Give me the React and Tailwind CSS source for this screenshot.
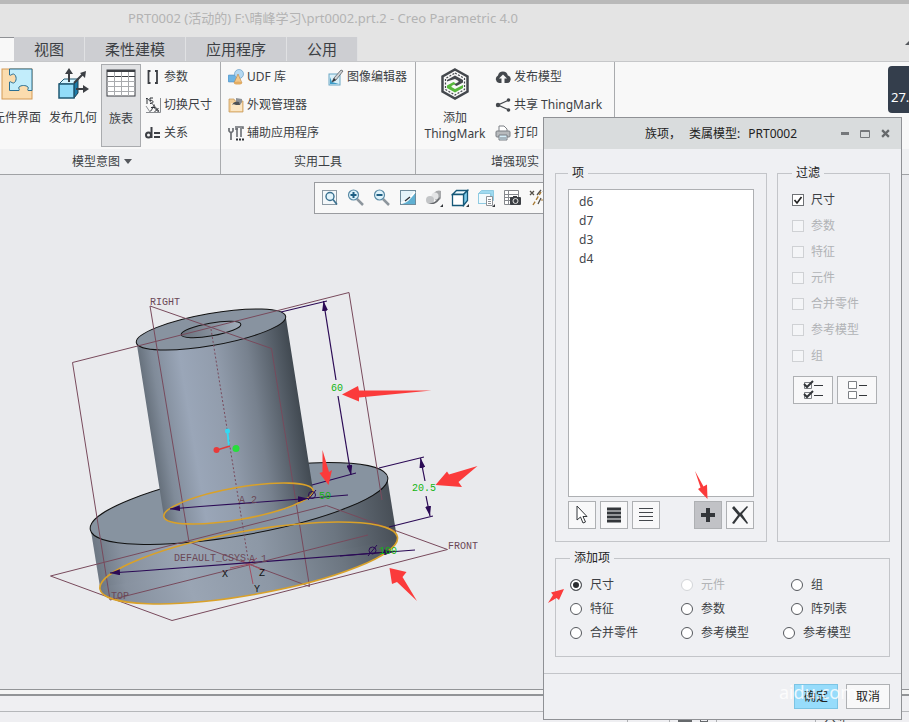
import React, { useState } from 'react';

const FILTERS = ['尺寸', '参数', '特征', '元件', '合并零件', '参考模型', '组'];

const ADD_ROWS = [
  [{ id: 'dim', label: '尺寸' }, { id: 'comp', label: '元件', disabled: true }, { id: 'group', label: '组' }],
  [{ id: 'feat', label: '特征' }, { id: 'param', label: '参数' }, { id: 'table', label: '阵列表' }],
  [{ id: 'merge', label: '合并零件' }, { id: 'ref', label: '参考模型' }, { id: 'ref2', label: '参考模型', shifted: true }],
];

/* ---------- ribbon icons ---------- */

const PuzzleIcon = () => (
  <svg width="32" height="32" viewBox="0 0 32 32">
    <rect x="1" y="1" width="30" height="30" fill="#fbdcae" stroke="#d49a55" />
    <path d="M8.500 1H31v21.500h-4c-1-1 1-2 0-3.500-2-2-7-2-9 0-1 1.500 1 2.500 0 3.500H8.500V14c1-1 2 1 4 1 3.500-1 3.500-8 0-9-2 0-3 2-4 1z" fill="#c2edfb" stroke="#2b6f93" />
  </svg>
);

const PublishIcon = () => (
  <svg width="32" height="32" viewBox="0 0 32 32" fill="none">
    <path d="M2 16l5-5h14l-4 5z" fill="#d4f4ff" stroke="#1f5873" />
    <path d="M17 16l4-5v14l-4 5z" fill="#1b7ba8" stroke="#1f3c4a" />
    <rect x="2" y="16" width="15" height="14" fill="#92dcf9" stroke="#1f5873" strokeWidth="1.500" />
    <path d="M12 14V4M17 15L26 6M19 21h9" stroke="#3c3f44" strokeWidth="2" />
    <path d="M12 0l4 6H8zM29 3l-1 7-5-5zM32 21l-6-4v8z" fill="#3c3f44" />
  </svg>
);

const TableIcon = () => (
  <svg width="30" height="28" viewBox="0 0 30 28">
    <rect x="1" y="1" width="28" height="26" fill="#fff" stroke="#3c3f44" />
    <rect x="1" y="1" width="28" height="2" fill="#3c3f44" />
    <path d="M1 7.500h28" stroke="#3c3f44" />
    <path d="M8.500 3v24M15.500 3v24M22.500 3v24M1 12.500h28M1 17.500h28M1 22.500h28" stroke="#a9abae" />
  </svg>
);

const HexIcon = () => (
  <svg width="30" height="32" viewBox="0 0 30 32" fill="none">
    <path d="M15 1.500l12.500 7v15L15 30.500l-12.500-7v-15z" stroke="#44484d" strokeWidth="2.500" />
    <path d="M15 5l9.500 5.500v11L15 27l-9.500-5.500v-11z" stroke="#44484d" strokeWidth="1.200" strokeDasharray="2 1.500" />
    <path d="M7 13.500V12l8-4.500 8 4.500v2.500L16.500 18l-2.500-1.500 4.500-2.500v-1L15 11z" fill="#44484d" />
    <path d="M7 17.500l6.500-3.500 2.500 1.500-4.500 2.500v1l3.500 2 8-4v3L15 24.500 7 20z" fill="#58b83c" />
  </svg>
);

const BracketIcon = () => (
  <svg width="16" height="16" viewBox="0 0 16 16" fill="none" stroke="#3c3f44" strokeWidth="1.800">
    <path d="M5.500 2H3.500v12h2M10 2h2v12h-2" />
  </svg>
);

const SwitchDimIcon = () => (
  <svg width="16" height="16" viewBox="0 0 16 16" fill="none" stroke="#8a8d91">
    <path d="M15.500 1v14.500H1M1 9l4 6M9 9l5 6" />
    <path d="M1 2l1-1v6M8 1H5v2.500c4-1 4 3.500 0 3" stroke="#2f3237" />
    <path d="M2 1l12 13" stroke="#55585d" />
    <path d="M5 14c2 1 3-7 5-6M6 10.500h4M9.500 11l4 4M13.500 11l-4 4" stroke="#2f3237" />
  </svg>
);

const RelationIcon = () => (
  <svg width="16" height="16" viewBox="0 0 16 16" fill="none" stroke="#3c3f44" strokeWidth="2">
    <circle cx="3.500" cy="10" r="2.500" />
    <path d="M6.500 2v11M9 8h6M9 12h6" />
  </svg>
);

const UdfIcon = () => (
  <svg width="16" height="16" viewBox="0 0 16 16">
    <rect x="0" y="6" width="9" height="7" rx="1" fill="#6db4e4" stroke="#3c7fb4" strokeWidth=".5" />
    <circle cx="11" cy="5" r="4.500" fill="#b4d8f2" stroke="#5b94c0" strokeWidth=".6" />
    <path d="M10 5l4 9H6z" fill="#f3c88a" stroke="#b98446" strokeWidth=".6" />
    <ellipse cx="10" cy="14" rx="4" ry="1.500" fill="#e3ac62" />
  </svg>
);

const AppearanceIcon = () => (
  <svg width="16" height="16" viewBox="0 0 16 16">
    <path d="M1 2h5l1 2h8v11H1z" fill="#f3cf98" stroke="#c39352" strokeWidth=".7" />
    <path d="M3 6h11v8H3z" fill="#fbe6c4" />
    <path d="M8 1l6 1v3l-2 3H8z" fill="#8d9196" />
    <path d="M4 8c1-3 4-4 7-3l1 3H8c-2-1-3-1-4 0z" fill="#4d5156" />
  </svg>
);

const ToolsIcon = () => (
  <svg width="16" height="16" viewBox="0 0 16 16" fill="none" stroke="#6a6e73">
    <path d="M1 3v3l2 2 2-2V3M3 8v7" strokeWidth="1.700" />
    <path d="M7 2h8v2M9 3v9M13 3v9M7 4h3" strokeWidth="1.600" />
    <path d="M8 14.500h2M11 14.500h2M14 14.500h2" stroke="#2f3237" strokeWidth="2" />
  </svg>
);

const ImageEditIcon = () => (
  <svg width="16" height="17" viewBox="0 0 16 17">
    <rect x="1" y="5" width="11" height="11" fill="#d9f0f9" stroke="#6aa6c4" />
    <path d="M2 15V8l2 5 7 2z" fill="#3d9cc8" />
    <path d="M4 13l2-4 7-8 2 1-7 9z" fill="#d2d4d6" stroke="#5b5f64" strokeWidth=".8" />
    <path d="M4 13l2-4 2 2z" fill="#2f3237" />
  </svg>
);

const CloudIcon = () => (
  <svg width="16" height="16" viewBox="0 0 16 16">
    <path d="M4 14a4 4 0 0 1-1-7.500 5 5 0 0 1 9.800 0A3.800 3.800 0 0 1 12 14z" fill="#44484d" />
    <path d="M8 5.500l4 4H9.500V14h-3V9.500H4z" fill="#f8f8f8" />
  </svg>
);

const ShareIcon = () => (
  <svg width="16" height="16" viewBox="0 0 16 16">
    <path d="M14 3L3 8l11 5" fill="none" stroke="#44484d" strokeWidth="1.300" />
    <circle cx="13.500" cy="3" r="1.800" fill="#44484d" />
    <circle cx="3" cy="8" r="2.200" fill="#44484d" />
    <circle cx="13.500" cy="13" r="1.800" fill="#44484d" />
  </svg>
);

const PrintIcon = () => (
  <svg width="16" height="16" viewBox="0 0 16 16" stroke="#7b7f84">
    <path d="M4 7V1h5l3 3v3" fill="#fff" />
    <rect x="1" y="6" width="14" height="6" rx="1" fill="#b7babd" />
    <path d="M4 10h8v5H4z" fill="#d5eef9" />
    <path d="M5 13h6" />
  </svg>
);

/* ---------- graphics toolbar icons ---------- */

const Corner = () => <path d="M18 15v3h-3z" fill="#33363a" />;

const VIEW_TOOLS = [
  { name: '重新调整', art: (
    <>
      <rect x="1.500" y="1.500" width="14" height="14" fill="#f4f8fa" stroke="#8c9aa4" />
      <circle cx="9" cy="7.500" r="4" fill="#e2f4fb" stroke="#39708f" strokeWidth="1.400" />
      <path d="M12 10.500l4 5" stroke="#39708f" strokeWidth="1.600" />
    </>
  ) },
  { name: '放大', art: (
    <>
      <path d="M10 10l6 6" stroke="#8d969d" strokeWidth="2.500" />
      <circle cx="6.500" cy="6" r="5" fill="#dff3fb" stroke="#5a8ba6" strokeWidth="1.200" />
      <path d="M6.500 3v6M3.500 6h6" stroke="#1f5f83" strokeWidth="2" />
    </>
  ) },
  { name: '缩小', art: (
    <>
      <path d="M10 10l6 6" stroke="#8d969d" strokeWidth="2.500" />
      <circle cx="6.500" cy="6" r="5" fill="#dff3fb" stroke="#5a8ba6" strokeWidth="1.200" />
      <path d="M3.500 6h6" stroke="#1f5f83" strokeWidth="2" />
    </>
  ) },
  { name: '重画', art: (
    <>
      <rect x="1.500" y="1.500" width="15" height="14" fill="#e4f3f9" stroke="#6f8c9c" />
      <path d="M16 4v11H3c5-1 9-5 13-11z" fill="#5fb0d2" />
      <path d="M2 14C8 12 12 8 16 3" stroke="#fff" strokeWidth="1.600" />
      <path d="M6 12l5-4" stroke="#2f3237" strokeWidth="1.500" />
    </>
  ) },
  { name: '渲染', art: (
    <>
      <path d="M9 4c2-3 6-3 7-2v7c-1 3-5 3-6 2z" fill="#a7a9ab" />
      <circle cx="10" cy="7" r="3.500" fill="#e4e5e6" />
      <circle cx="5" cy="11" r="4" fill="#c3c5c7" />
      <path d="M3 14c5 1 8-2 12-6-1 5-6 9-12 6z" fill="#66696d" />
      <Corner />
    </>
  ) },
  { name: '显示样式', art: (
    <>
      <path d="M1.500 5.500l4-4h11l-4 4z" fill="#eefaff" stroke="#155878" strokeWidth="1.300" />
      <path d="M12.500 5.500l4-4v10l-4 5z" fill="#7fcdec" stroke="#155878" strokeWidth="1.300" />
      <path d="M1.500 5.500h11v11h-11z" fill="#fff" stroke="#155878" strokeWidth="1.300" />
      <Corner />
    </>
  ) },
  { name: '已保存方向', art: (
    <>
      <path d="M1.500 4.500l3-3h12v10H14V4.500z" fill="#9edaf0" stroke="#8fcbe2" />
      <rect x="1.500" y="4.500" width="12" height="10" fill="#f1fafd" stroke="#8fcbe2" />
      <path d="M9.500 7.500h6v9h-6z" fill="#fff" stroke="#8d9196" />
      <path d="M11 10.500h3M11 12.500h3M11 14.500h3" stroke="#8d9196" />
      <Corner />
    </>
  ) },
  { name: '视图管理器', art: (
    <>
      <path d="M1.500 1.500h14v14h-14zM1.500 5.500h14M5.500 1.500v14M1.500 8.500h14M1.500 11.500h8" fill="#fff" stroke="#85888d" />
      <rect x="7" y="8" width="11" height="8" rx="1" fill="#3c3f44" />
      <path d="M10 7h4v2h-4z" fill="#3c3f44" />
      <circle cx="12.500" cy="12" r="2.500" fill="#3c3f44" stroke="#e5e5e5" />
    </>
  ) },
  { name: '基准显示', art: (
    <>
      <path d="M1 2l4 4M5 2L1 6M8 6l4-5M14 2l2 2M9 15l3-6" stroke="#54504a" strokeWidth="1.300" />
      <path d="M4 16L12 3" stroke="#a87a33" strokeWidth="1.400" strokeDasharray="4 2" />
      <path d="M12 11h4" stroke="#a87a33" />
    </>
  ) },
];

/* ---------- ribbon ---------- */

const SmallCommand = ({ icon, children }) => (
  <button type="button" className="flex h-7 items-center gap-[3px] whitespace-nowrap leading-4">
    {icon}
    <span>{children}</span>
  </button>
);

const RibbonGroup = ({ title, className, titleClass = '', children }) => (
  <section className={`flex shrink-0 flex-col border-r border-[#a9abae] ${className}`}>
    <div className="flex h-[87px] items-start">{children}</div>
    <h2 className={`flex h-[25px] items-center justify-center gap-1 bg-[#eff0f2] ${titleClass}`}>{title}</h2>
  </section>
);

const Tab = ({ children }) => (
  <button type="button" className="h-6 border-r border-[#e0e1e3] bg-[#cdced2] px-5 text-[15px] leading-6">
    {children}
  </button>
);

const Ribbon = () => (
  <div className="flex h-[113px] shrink-0 border-b border-[#a0a2a5] bg-[#f8f8f8]">
    <RibbonGroup
      className="w-[221px]"
      titleClass="pr-4"
      title={
        <>
          模型意图
          <svg width="8" height="5" viewBox="0 0 8 5"><path d="M0 0h8L4 5z" fill="#55585d" /></svg>
        </>
      }
    >
      <button type="button" className="-ml-2 flex w-[50px] shrink-0 flex-col items-center gap-2 whitespace-nowrap pt-1.5 leading-5">
        <PuzzleIcon />
        元件界面
      </button>
      <button type="button" className="ml-1.5 flex w-[50px] shrink-0 flex-col items-center gap-2 whitespace-nowrap pt-1.5 leading-5">
        <PublishIcon />
        发布几何
      </button>
      <button type="button" className="ml-[3px] mt-0.5 flex h-[83px] w-10 shrink-0 flex-col items-center gap-3 border border-[#a9abae] bg-[#e1e2e4] pt-1 leading-5">
        <TableIcon />
        族表
      </button>
      <div className="ml-1 flex flex-col pt-px">
        <SmallCommand icon={<BracketIcon />}>参数</SmallCommand>
        <SmallCommand icon={<SwitchDimIcon />}>切换尺寸</SmallCommand>
        <SmallCommand icon={<RelationIcon />}>关系</SmallCommand>
      </div>
    </RibbonGroup>

    <RibbonGroup className="w-[195px]" title="实用工具">
      <div className="ml-[7px] flex w-[100px] flex-col pt-px">
        <SmallCommand icon={<UdfIcon />}>UDF 库</SmallCommand>
        <SmallCommand icon={<AppearanceIcon />}>外观管理器</SmallCommand>
        <SmallCommand icon={<ToolsIcon />}>辅助应用程序</SmallCommand>
      </div>
      <div className="pt-px">
        <SmallCommand icon={<ImageEditIcon />}>图像编辑器</SmallCommand>
      </div>
    </RibbonGroup>

    <RibbonGroup className="w-[199px]" title="增强现实">
      <button type="button" className="ml-1.5 flex w-[66px] flex-col items-center pt-1.5 leading-4">
        <HexIcon />
        <span className="mt-2.5">添加</span>
        <span>ThingMark</span>
      </button>
      <div className="ml-[7px] flex flex-col pt-px">
        <SmallCommand icon={<CloudIcon />}>发布模型</SmallCommand>
        <SmallCommand icon={<ShareIcon />}>共享 ThingMark</SmallCommand>
        <SmallCommand icon={<PrintIcon />}>打印</SmallCommand>
      </div>
    </RibbonGroup>

    <div className="flex flex-1 flex-col">
      <div className="h-[87px]" />
      <div className="h-[25px] bg-[#eff0f2]" />
    </div>
  </div>
);

/* ---------- 3D model ---------- */

const Model = () => (
  <svg width="543" height="514" viewBox="0 175 543 514" fill="none">
    <defs>
      <linearGradient id="shaft" gradientUnits="userSpaceOnUse" x1="148" y1="430" x2="300" y2="405">
        <stop offset="0" stopColor="#626c77" />
        <stop offset=".1" stopColor="#808b99" />
        <stop offset=".28" stopColor="#9aa6b8" />
        <stop offset=".5" stopColor="#929dad" />
        <stop offset=".72" stopColor="#77818e" />
        <stop offset="1" stopColor="#414951" />
      </linearGradient>
      <linearGradient id="flange" gradientUnits="userSpaceOnUse" x1="93" y1="570" x2="394" y2="520">
        <stop offset="0" stopColor="#69737f" />
        <stop offset=".1" stopColor="#87919f" />
        <stop offset=".3" stopColor="#9aa5b4" />
        <stop offset=".55" stopColor="#8d98a6" />
        <stop offset=".8" stopColor="#6c7681" />
        <stop offset="1" stopColor="#484f57" />
      </linearGradient>
      <linearGradient id="hole" x1="0" y1="0" x2="1" y2="0">
        <stop offset="0" stopColor="#69727d" />
        <stop offset="1" stopColor="#a3aebb" />
      </linearGradient>
      <marker id="dim" orient="auto" markerUnits="userSpaceOnUse" markerWidth="11" markerHeight="6" refX="10" refY="3">
        <path d="M0 0l10 3-10 3z" fill="#2b0a55" />
      </marker>
    </defs>

    {/* solids */}
    <ellipse cx="248.700" cy="563" rx="151" ry="32" transform="rotate(-9.950 248.700 563)" fill="url(#flange)" />
    <path d="M90.500 528L100 587 249 566 397.300 540 387.500 479z" fill="url(#flange)" />
    <ellipse cx="239" cy="503.500" rx="151" ry="32" transform="rotate(-9.950 239 503.500)" fill="#8793a0" stroke="#111" />
    <path d="M136.500 342L164 517A75.800 16-9.950 0 0 313.300 492L285.800 317A75.800 16-9.950 0 1 136.500 342z" fill="url(#shaft)" />
    <ellipse cx="211" cy="329.500" rx="75.800" ry="16" transform="rotate(-9.950 211 329.500)" fill="#8893a0" stroke="#111" />
    <ellipse cx="211" cy="329.500" rx="30.300" ry="6.400" transform="rotate(-9.950 211 329.500)" fill="url(#hole)" stroke="#111" />

    {/* datum planes */}
    <g stroke="#784a5c">
      <path d="M110 600L72.500 362.500 349 292.500 382 500M110 600L368 535" />
      <path d="M189 542L150 306 271.500 348.500 309.500 586.500z" />
      <path d="M50.500 576L172 620.500 447.500 549.500 326.500 505.500z" />
      <path d="M211 329L249 565" strokeDasharray="2 2" />
      <path d="M230 568l19-4 4 20M249 564l16 7M249 564l-7-3M249 564l8-6" stroke="#a04f62" />
    </g>

    {/* selected edges */}
    <g stroke="#d9a129" strokeWidth="1.600">
      <ellipse cx="238.500" cy="503.500" rx="75.800" ry="16" transform="rotate(-9.950 238.500 503.500)" />
      <ellipse cx="248.700" cy="563" rx="151" ry="32" transform="rotate(-9.950 248.700 563)" />
    </g>

    {/* dimensions */}
    <g stroke="#2b0a55" strokeWidth="1.200">
      <path d="M281 312l46-11M312 485l44-12M379 468l45-11M389 527l44-11M300 499l48-4M140 571L415 550" />
      <path d="M336 380L323.500 301" markerEnd="url(#dim)" />
      <path d="M338 396L351 475" markerEnd="url(#dim)" />
      <path d="M425 481L420.500 458" markerEnd="url(#dim)" />
      <path d="M426 496L430 516" markerEnd="url(#dim)" />
      <path d="M200 506.500L170 509" markerEnd="url(#dim)" />
      <path d="M200 506.500L308 498.500" markerEnd="url(#dim)" />
      <path d="M140 571L110 573" markerEnd="url(#dim)" />
      <path d="M340 556L394 551.500" markerEnd="url(#dim)" />
    </g>

    {/* orientation triad */}
    <path d="M227.500 432l1.500 14" stroke="#35d8f2" strokeWidth="2" />
    <path d="M217 450l13-4" stroke="#e03a3a" strokeWidth="1.500" />
    <circle cx="227.500" cy="431" r="2.500" fill="#35d8f2" />
    <circle cx="216.500" cy="450" r="3" fill="#e83a3a" />
    <circle cx="236" cy="448.500" r="3.500" fill="#27de3b" />

    <g fontFamily="'Liberation Mono', monospace" fontSize="10" fill="#6b4856">
      <text x="150" y="305">RIGHT</text>
      <text x="448" y="549">FRONT</text>
      <text x="111" y="599">TOP</text>
      <text x="174" y="561">DEFAULT_CSYS</text>
      <text x="249" y="562">A_1</text>
      <text x="239" y="503">A_2</text>
      <g fill="#111">
        <text x="222" y="577">X</text>
        <text x="259" y="576">Z</text>
        <text x="254" y="592">Y</text>
      </g>
      <g fill="#12b512">
        <text x="331" y="391">60</text>
        <text x="412" y="491">20.5</text>
        <text x="319" y="499">50</text>
        <text x="379" y="554">100</text>
      </g>
    </g>
    <g stroke="#2b0a55">
      <circle cx="312" cy="495" r="3.500" />
      <path d="M308 500l8-10M368 556l9-11" />
      <circle cx="372.500" cy="550.500" r="3.500" />
    </g>

    {/* callouts */}
    <g fill="#fb3b3b">
      <path d="M342 394.500l16-8.500 1 4.500 72.500 0-72.500 7v4z" />
      <path d="M322.500 450l6.500 22 3-2-3.500 15-9-12 3-1z" />
      <path d="M477.500 466l-28.500 8.500-2-3-11.500 13.500 26.500 2-3.500-5z" />
      <path d="M389.500 568l17 4-4 5 14.500 24-20-19-5 2z" />
    </g>
  </svg>
);

const Viewport = () => (
  <main className="relative min-h-0 flex-1 overflow-hidden bg-[#e9eaed]">
    <Model />
    <div className="absolute left-[314px] top-[7px] flex h-8 w-[248px] items-center gap-2 border border-[#9a9ca0] bg-[#f8f8f8] pl-1.5">
      {VIEW_TOOLS.map((tool) => (
        <button key={tool.name} type="button" aria-label={tool.name} className="shrink-0">
          <svg width="18" height="18" viewBox="0 0 18 18" fill="none">{tool.art}</svg>
        </button>
      ))}
    </div>
  </main>
);

/* ---------- dialog ---------- */

const Panel = ({ title, className = '', children }) => (
  <fieldset className={`min-w-0 border border-[#c3c5c9] ${className}`}>
    <legend className="px-1 leading-4 text-[#222]">{title}</legend>
    {children}
  </fieldset>
);

const ToolButton = ({ label, active, className = 'h-7 w-7', children }) => (
  <button
    type="button"
    aria-label={label}
    className={`flex shrink-0 items-center justify-center border border-[#aeb0b3] ${active ? 'bg-[#c1c2c6]' : 'bg-[#f8f8f9]'} ${className}`}
  >
    {children}
  </button>
);

const CheckRow = ({ label, checked, disabled, onChange }) => (
  <label className={`flex h-[26px] items-center gap-[7px] ${disabled ? 'text-[#b1b3b6]' : 'text-[#3c3f44]'}`}>
    <span className="grid h-3 w-3 place-items-center">
      <input
        type="checkbox"
        checked={checked}
        disabled={disabled}
        onChange={onChange}
        className="col-start-1 row-start-1 h-3 w-3 appearance-none border border-[#6f7276] bg-white disabled:border-[#cfd1d4] disabled:bg-[#f4f5f7]"
      />
      {checked && (
        <svg width="10" height="10" viewBox="0 0 10 10" fill="none" className="pointer-events-none col-start-1 row-start-1">
          <path d="M1.500 5l2.500 3 4.500-6" stroke="#222" strokeWidth="1.700" />
        </svg>
      )}
    </span>
    {label}
  </label>
);

const RadioOption = ({ option, value, onChange }) => (
  <label
    className={`flex items-center gap-2 ${option.shifted ? '-ml-2' : ''} ${option.disabled ? 'text-[#b1b3b6]' : 'text-[#3c3f44]'}`}
  >
    <input
      type="radio"
      name="add-item"
      checked={value === option.id}
      disabled={option.disabled}
      onChange={() => onChange(option.id)}
      className="h-3 w-3 shrink-0 appearance-none rounded-full border border-[#55585d] bg-white checked:bg-[#2b2d30] checked:shadow-[inset_0_0_0_2px_white] disabled:border-[#d3d5d8]"
    />
    {option.label}
  </label>
);

const FamilyDialog = () => {
  const [filterOn, setFilterOn] = useState(true);
  const [addType, setAddType] = useState('dim');

  return (
    <div role="dialog" aria-label="族项" className="absolute right-[7px] top-[117px] w-[359px] border border-[#8f9195] bg-[#eff0f3]">
      <header className="flex h-[31px] items-center bg-[#d9dcdd] pl-[101px] pr-2 leading-5 text-[#222]">
        <span className="flex gap-2 whitespace-nowrap">
          <span>族项，</span>
          <span>类属模型:</span>
          <span>PRT0002</span>
        </span>
        <div className="ml-auto flex items-center gap-1">
          <button type="button" aria-label="最小化" className="flex h-4 w-4 items-center justify-center">
            <svg width="8" height="3" viewBox="0 0 8 3"><path d="M0 0h8v3H0z" fill="#75787b" /></svg>
          </button>
          <button type="button" aria-label="最大化" className="flex h-4 w-4 items-center justify-center">
            <svg width="10" height="8" viewBox="0 0 10 8"><path d="M.5.5h9v7h-9zM0 1.500h10" fill="none" stroke="#75787b" /></svg>
          </button>
          <button type="button" aria-label="关闭" className="flex h-4 w-4 items-center justify-center">
            <svg width="9" height="9" viewBox="0 0 8 8"><path d="M1 1l6 6M7 1L1 7" stroke="#66696c" strokeWidth="2" /></svg>
          </button>
        </div>
      </header>

      <div className="flex gap-2.5 px-[11px] pt-4">
        <Panel title="项" className="w-[212px] shrink-0 px-3 pb-3">
          <ul className="mt-2 h-[308px] border border-[#aeb0b3] bg-white py-0.5 pl-2.5 leading-[19px] text-[#44474c]">
            {['d6', 'd7', 'd3', 'd4'].map((d) => <li key={d}>{d}</li>)}
          </ul>
          <div className="mt-1 flex gap-1">
            <ToolButton label="选择">
              <svg width="14" height="20" viewBox="0 0 14 20"><path d="M2 1v14l3.500-3 2.500 6 2.500-1L8 11.500h4z" fill="#fff" stroke="#33363a" /></svg>
            </ToolButton>
            <ToolButton label="全部选择">
              <svg width="14" height="16" viewBox="0 0 14 16"><path d="M0 2h14M0 6h14M0 10h14M0 14h14" stroke="#33363a" strokeWidth="3" /></svg>
            </ToolButton>
            <ToolButton label="全部取消">
              <svg width="14" height="14" viewBox="0 0 14 14"><path d="M0 .5h14M0 4.500h14M0 8.500h14M0 12.500h14" stroke="#44474c" /></svg>
            </ToolButton>
            <div className="relative ml-auto">
              <ToolButton label="添加" active>
                <svg width="14" height="14" viewBox="0 0 14 14"><path d="M7 0v14M0 7h14" stroke="#33363a" strokeWidth="4" /></svg>
              </ToolButton>
              <svg width="14" height="28" viewBox="0 0 14 28" className="pointer-events-none absolute -top-[30px] left-0">
                <path d="M1 0l8.500 15.500 3.500-2 .5 14.500-9.500-10 2.500-1.500z" fill="#fb3b3b" />
              </svg>
            </div>
            <ToolButton label="移除">
              <svg width="18" height="18" viewBox="0 0 18 18"><path d="M1 2l2-2 6 7 7-7 1 1-6 7 6 9-1 1-7-8-6 8-2-1 6-8z" fill="#33363a" /></svg>
            </ToolButton>
          </div>
        </Panel>

        <Panel title="过滤" className="flex-1 pl-3.5">
          <div className="mt-1.5">
            {FILTERS.map((name, i) => (
              <CheckRow
                key={name}
                label={name}
                checked={i === 0 && filterOn}
                disabled={i > 0}
                onChange={() => setFilterOn(!filterOn)}
              />
            ))}
          </div>
          <div className="mt-[7px] flex gap-1 pl-px">
            <ToolButton label="全部过滤" className="h-7 w-10">
              <svg width="20" height="20" viewBox="0 0 20 20" fill="none" stroke="#33363a">
                <path d="M1.500 2.500h7v6h-7zM1.500 12.500h7v6h-7z" stroke="#7d8085" />
                <path d="M1 4l3 3 6-6M1 14l3 3 6-6" strokeWidth="2" />
                <path d="M11 5.500h9M11 15.500h9" />
              </svg>
            </ToolButton>
            <ToolButton label="清除过滤" className="h-7 w-10">
              <svg width="20" height="20" viewBox="0 0 20 20" fill="none" stroke="#33363a">
                <path d="M1.500 1.500h8v7h-8zM1.500 11.500h8v7h-8z" fill="#fff" stroke="#7d8085" />
                <path d="M12 5.500h8M12 15.500h8" />
              </svg>
            </ToolButton>
          </div>
        </Panel>
      </div>

      <div className="relative px-[11px] pt-2">
        <Panel title="添加项" className="pb-[11px] pl-3.5">
          <div className="mt-[7px]">
            {ADD_ROWS.map((row) => (
              <div key={row[0].id} className="grid h-6 grid-cols-[111px_110px_1fr]">
                {row.map((option) => (
                  <RadioOption key={option.id} option={option} value={addType} onChange={setAddType} />
                ))}
              </div>
            ))}
          </div>
        </Panel>
        <svg width="16" height="15" viewBox="0 0 16 15" className="pointer-events-none absolute left-1 top-[47px]">
          <path d="M0 14l5-8-2-2.500L16 0l-5 11-2.500-2z" fill="#fb3b3b" />
        </svg>
      </div>

      <footer className="relative mt-4 flex justify-end gap-2 border-t border-[#c3c5c9] px-[11px] pb-2.5 pt-2.5">
        <button type="button" className="h-[25px] w-11 border border-[#7cc4e4] bg-[#97dcfb] text-[#222]">确定</button>
        <button type="button" className="h-[25px] w-11 border border-[#aeb0b3] bg-[#f8f8f9] text-[#222]">取消</button>
        <span className="pointer-events-none absolute right-11 top-1.5 text-lg leading-6 text-white opacity-80">aidu.com</span>
      </footer>
    </div>
  );
};

const App = () => (
  <div className="relative flex h-screen flex-col overflow-hidden bg-[#efeff2] font-['Noto_Sans','Noto_Sans_CJK_SC',sans-serif] text-xs text-[#3c3f44]">
    <header className="h-[37px] shrink-0 border-t-4 border-[#b9b9b9] bg-[#e4e4e4] pl-32">
      <h1 className="whitespace-nowrap pt-1 text-[13px] leading-5 text-[#b3b3b3]">
        PRT0002 (活动的) F:\晴峰学习\prt0002.prt.2 - Creo Parametric 4.0
      </h1>
    </header>

    <nav className="flex h-[25px] shrink-0 items-start border-b border-[#c6c7c9] bg-[#e4e4e4]">
      <div className="h-6 w-3.5 border-t border-[#8f9195] bg-[#f8f8f8]" />
      <Tab>视图</Tab>
      <Tab>柔性建模</Tab>
      <Tab>应用程序</Tab>
      <Tab>公用</Tab>
      <svg width="8" height="4" viewBox="0 0 8 4" className="-mr-1 ml-auto mt-1"><path d="M0 4h8L4 0z" fill="#55585d" /></svg>
    </nav>

    <Ribbon />
    <Viewport />

    <div className="h-[7px] shrink-0 border-b-2 border-t border-[#929497] bg-[#f4f4f4]" />
    <div className="h-4 shrink-0 border-b border-[#b5b7ba]" />
    <footer className="flex h-2.5 shrink-0 justify-end overflow-hidden pr-7.5">
      <div className="w-[42px] border-l border-[#aeb0b3]" />
      <div className="flex w-12 items-center justify-center gap-2 border-x border-[#aeb0b3]">
        <span className="h-2.5 w-3.5 bg-[#66696c]" />
        <span className="h-2.5 w-2 border border-[#66696c]" />
      </div>
      <div className="w-[98px]" />
      <div className="w-16 border-l border-[#aeb0b3] pl-2 leading-6">分选</div>
    </footer>

    <div className="absolute right-0 top-[66px] flex h-[47px] w-[21px] items-center overflow-hidden rounded-l bg-[#343e4c] pl-[3px] pt-4 text-[13px] text-white">
      27.
    </div>
    <FamilyDialog />
  </div>
);

export default App;
